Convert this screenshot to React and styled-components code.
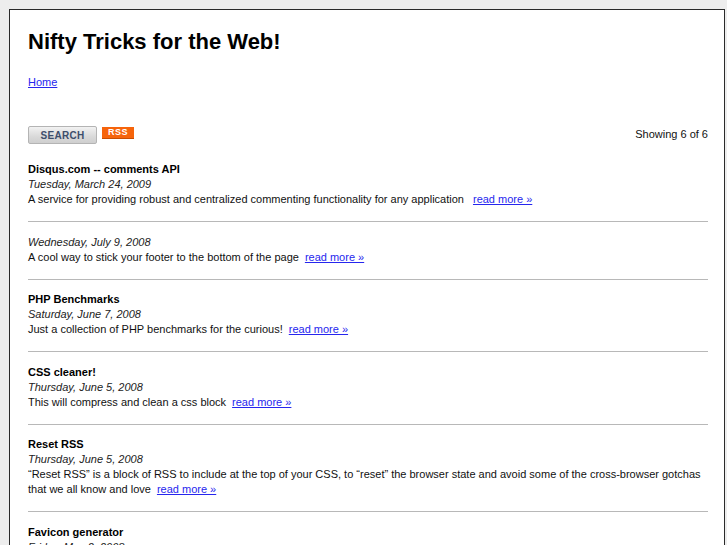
import React from "react";
import styled, { createGlobalStyle } from "styled-components";

const Global = createGlobalStyle`
  html, body { margin: 0; padding: 0; }
  body {
    background: #ededed;
    font-family: "Liberation Sans", Arial, Helvetica, sans-serif;
    color: #111;
  }
`;

const Page = styled.div`
  margin: 9px 0 0 9px;
  width: 716px;
  min-height: 560px;
  background: #fff;
  border: 1px solid #2a2a2a;
  padding: 19px 16px 0 18px;
  box-sizing: border-box;
`;

const Title = styled.h1`
  margin: 0;
  font-size: 22px;
  line-height: 26px;
  font-weight: bold;
  color: #000;
`;

const Nav = styled.div`
  margin-top: 20px;
  font-size: 11px;
  line-height: 14px;
`;

const Link = styled.a`
  color: #2626ee;
  text-decoration: underline;
  font-size: 11px;
  margin-left: ${(p) => p.$gap || 0}px;
`;

const Toolbar = styled.div`
  margin-top: 37px;
  display: flex;
  align-items: flex-start;
  justify-content: space-between;
`;

const Buttons = styled.div`
  display: flex;
  align-items: flex-start;
  gap: 5px;
`;

const SearchButton = styled.button`
  width: 69px;
  height: 18px;
  padding: 0;
  border: 1px solid #b4b4b4;
  border-radius: 2px;
  background: linear-gradient(#f2f2f2, #d9d9d9 60%, #cfcfcf);
  color: #3d4e6c;
  font-family: "Liberation Sans", Arial, sans-serif;
  font-weight: bold;
  font-size: 10px;
  letter-spacing: 0.3px;
`;

const RssBadge = styled.span`
  display: inline-block;
  margin-top: 1px;
  width: 32px;
  height: 12px;
  background: #f6640b;
  color: #fff;
  font-weight: bold;
  font-size: 9px;
  line-height: 11px;
  text-align: center;
  letter-spacing: 0.5px;
  border-bottom: 1px solid #c84d00;
  box-sizing: border-box;
`;

const Count = styled.div`
  font-size: 11px;
  line-height: 14px;
  margin-top: 1px;
  color: #111;
`;

const List = styled.div`
  margin-top: 18px;
`;

const Post = styled.div`
  padding-top: ${(p) => (p.$first ? 0 : 12.5)}px;
  padding-bottom: 14px;
  border-bottom: ${(p) => (p.$last ? "none" : "1px solid #b8b8b8")};
  font-size: 11px;
  line-height: 15px;
`;

const PostTitle = styled.div`
  font-weight: bold;
  color: #000;
`;

const PostDate = styled.div`
  font-style: italic;
  color: #222;
`;

const PostText = styled.div`
  color: #111;
`;

const posts = [
  {
    title: "Disqus.com -- comments API",
    date: "Tuesday, March 24, 2009",
    text: "A service for providing robust and centralized commenting functionality for any application",
    gap: 9,
  },
  {
    title: "",
    date: "Wednesday, July 9, 2008",
    text: "A cool way to stick your footer to the bottom of the page",
    gap: 6,
  },
  {
    title: "PHP Benchmarks",
    date: "Saturday, June 7, 2008",
    text: "Just a collection of PHP benchmarks for the curious!",
    gap: 6,
  },
  {
    title: "CSS cleaner!",
    date: "Thursday, June 5, 2008",
    text: "This will compress and clean a css block",
    gap: 6,
  },
  {
    title: "Reset RSS",
    date: "Thursday, June 5, 2008",
    text: "\u201CReset RSS\u201D is a block of RSS to include at the top of your CSS, to \u201Creset\u201D the browser state and avoid some of the cross-browser gotchas that we all know and love",
    gap: 6,
  },
  {
    title: "Favicon generator",
    date: "Friday, May 2, 2008",
    text: "Create a favicon from an image",
    gap: 6,
    last: true,
  },
];

export default function App() {
  return (
    <>
      <Global />
      <Page>
        <Title>Nifty Tricks for the Web!</Title>
        <Nav>
          <Link href="#">Home</Link>
        </Nav>
        <Toolbar>
          <Buttons>
            <SearchButton>SEARCH</SearchButton>
            <RssBadge>RSS</RssBadge>
          </Buttons>
          <Count>Showing 6 of 6</Count>
        </Toolbar>
        <List>
          {posts.map((p, i) => (
            <Post key={i} $first={i === 0} $last={p.last}>
              {p.title && <PostTitle>{p.title}</PostTitle>}
              <PostDate>{p.date}</PostDate>
              <PostText>
                {p.text}
                <Link href="#" $gap={p.gap}>read more »</Link>
              </PostText>
            </Post>
          ))}
        </List>
      </Page>
    </>
  );
}
